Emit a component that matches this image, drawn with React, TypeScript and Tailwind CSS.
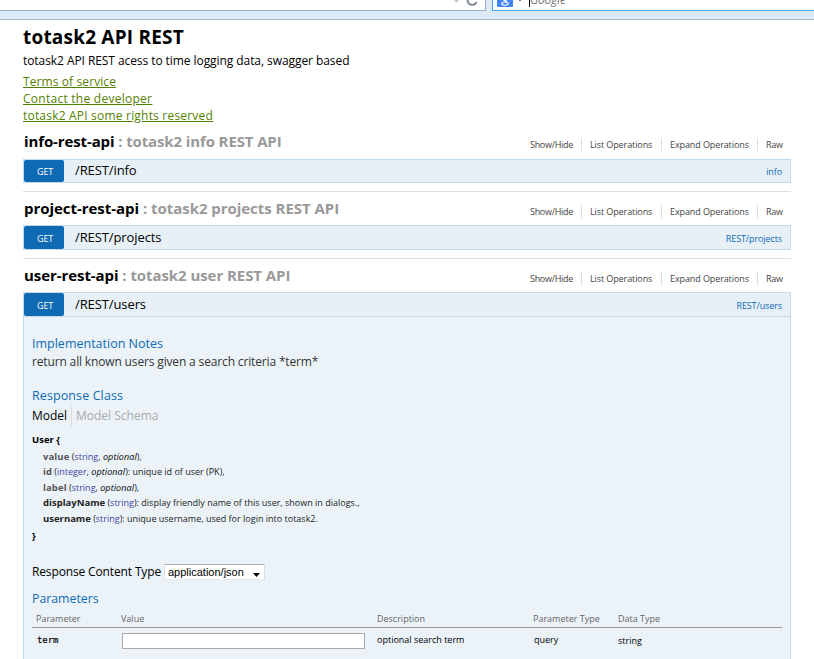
import React from "react";

function BrowserEdge() {
  return (
    <div className="relative h-5 overflow-hidden border-b border-[#9fb6d3] bg-[#dce9f7]">
      <div className="flex h-[11px] gap-[6px]">
        <div className="flex h-[11px] w-[486px] justify-end border-r border-b border-[#99adc4] bg-white">
          <svg className="h-[10px] w-8" viewBox="0 0 32 10" fill="none">
            <path d="M1 0h5L3.500 3z" fill="#c3cad4" />
            <path d="M15 -1.500a4.300 4.300 0 0 0 8.500 3.500" stroke="#7d8895" strokeWidth="2" />
          </svg>
        </div>
        <div className="flex h-[11px] flex-1 border-b border-l border-[#45a5f5] bg-white">
          <div className="ml-1 h-[7px] w-4 rounded-b-[1px] bg-[#4285f4]">
            <svg className="h-[7px] w-4" viewBox="0 0 16 7" fill="none" stroke="#fff" strokeWidth="1.100">
              <path d="M6.500 0q1.500 1 3 0M8 1l2 1.300" />
              <ellipse cx="8" cy="3.600" rx="3.300" ry="1.600" />
            </svg>
          </div>
          <span className="ml-[6px] h-px w-[2px] bg-[#777]" />
          <span className="ml-2 h-[7px] w-px bg-black" />
          <span className="-mt-[9px] text-[12px] leading-[17px] tracking-[-0.2px] text-[#777] italic">Google</span>
        </div>
      </div>
    </div>
  );
}

function ResourceHeading({ name, about, titleClass, navClass }: { name: string; about: string; titleClass: string; navClass: string }) {
  return (
    <div className="flex h-[33px] justify-between pr-2 pl-px">
      <h2 className={"text-[15px] font-bold whitespace-pre " + titleClass}>
        {name}<span className="text-[#999]"> : {about}</span>
      </h2>
      <ul className={"flex text-[9px] leading-[13px] tracking-[-0.1px] whitespace-nowrap text-[#444] " + navClass}>
        <li className="h-[13px] w-[52px] border-r border-[#ddd] tracking-[-0.3px]">Show/Hide</li>
        <li className="h-[13px] w-[80px] border-r border-[#ddd] pl-2">List Operations</li>
        <li className="h-[13px] w-[96px] border-r border-[#ddd] pl-2">Expand Operations</li>
        <li className="w-[25px] pl-2 tracking-[-0.3px]">Raw</li>
      </ul>
    </div>
  );
}

function Operation({ path, link, sizeClass, pathClass }: { path: string; link: string; sizeClass: string; pathClass: string }) {
  return (
    <div className={"flex border border-[#c3d9ec] bg-[#e7f0f7] " + sizeClass}>
      <span className="h-full w-10 rounded-[2px] bg-[#0f6ab4] pt-px pl-[2px] text-center text-[9px] tracking-[-0.2px] text-white">GET</span>
      <span className={"ml-[11px] flex-1 text-[13px] tracking-[-0.1px] " + pathClass}>{path}</span>
      <span className="pt-px pr-2 text-[9px] tracking-[-0.1px] text-[#0f6ab4]">{link}</span>
    </div>
  );
}

function Field({ name, type, optional, note, tone }: { name: string; type: string; optional?: boolean; note: string; tone: string }) {
  return (
    <div className="text-[9px] leading-[15.500px] whitespace-pre text-[#222]">
      <b className={"text-[9.500px] " + tone}>{name}</b> (<span className="text-[#4444a4]">{type}</span>
      {optional && <>, <i className="tracking-[0.1px] text-black">optional</i></>}){note}
    </div>
  );
}

export default function App() {
  return (
    <div className="h-[659px] overflow-hidden bg-white font-['Open_Sans','Noto_Sans',sans-serif] text-black">
      <BrowserEdge />
      <main className="ml-[23px] w-[768px]">
        <h1 className="h-[33px] text-[19px] leading-[34px] font-bold tracking-[0.2px] whitespace-nowrap">totask2 API REST</h1>
        <p className="h-5 text-[12px] leading-[16px] tracking-[-0.07px] whitespace-nowrap">totask2 API REST acess to time logging data, swagger based</p>
        <div className="flex h-[53px] flex-col items-start text-[12px] leading-[17px] text-[#547f00] underline">
          <a className="tracking-[0.1px]">Terms of service</a>
          <a className="tracking-[0.26px]">Contact the developer</a>
          <a className="tracking-[0.2px]">totask2 API some rights reserved</a>
        </div>
        <ResourceHeading name="info-rest-api" about="totask2 info REST API" titleClass="leading-[31px] tracking-[-0.12px]" navClass="pt-[12px]" />
        <Operation path="/REST/info" link="info" sizeClass="h-6 leading-[22px]" pathClass="leading-[21px]" />
        <div className="h-[9px] border-b border-[#ddd]" />
        <ResourceHeading name="project-rest-api" about="totask2 projects REST API" titleClass="leading-[33px] tracking-[-0.04px]" navClass="pt-[13px]" />
        <Operation path="/REST/projects" link="REST/projects" sizeClass="h-[25px] leading-[23px]" pathClass="" />
        <div className="h-[9px] border-b border-[#ddd]" />
        <ResourceHeading name="user-rest-api" about="totask2 user REST API" titleClass="leading-[33px] tracking-[-0.07px]" navClass="pt-[13px]" />
        <Operation path="/REST/users" link="REST/users" sizeClass="h-[25px] leading-[23px]" pathClass="" />
        <section className="h-[350px] border-x border-[#c3d9ec] bg-[#ebf3f9] px-2 pt-[18px] whitespace-nowrap">
          <h4 className="h-[18px] text-[12.500px] leading-[18px] text-[#0f6ab4]">Implementation Notes</h4>
          <p className="h-[34px] text-[12px] leading-[18px] tracking-[-0.15px] text-[#333]">return all known users given a search criteria *term*</p>
          <h4 className="h-[19px] text-[12.500px] leading-[18px] tracking-[0.1px] text-[#0f6ab4]">Response Class</h4>
          <div className="flex h-[21px] text-[12px] leading-[20px]">
            <span className="w-10 border-r border-[#ddd]">Model</span>
            <span className="ml-1 text-[#aaa]">Model Schema</span>
          </div>
          <div className="mt-[5px] h-[17px] text-[9.500px] leading-[15px] font-bold">{"User {"}</div>
          <div className="-mt-[0.500px] h-[79.500px] pl-[11px]">
            <Field name="value" type="string" optional note="," tone="text-[#555] tracking-[0.1px]" />
            <Field name="id" type="integer" optional note=": unique id of user (PK)," tone="text-[#555]" />
            <Field name="label" type="string" optional note="," tone="text-[#555] tracking-[0.1px]" />
            <Field name="displayName" type="string" note=": display friendly name of this user, shown in dialogs.," tone="text-[#222]" />
            <Field name="username" type="string" note=": unique username, used for login into totask2." tone="text-[#222]" />
          </div>
          <div className="h-[35px] text-[9.500px] leading-[15px] font-bold">{"}"}</div>
          <div className="flex h-[27px] text-[12px]">
            <span className="w-[132px] leading-[18px] tracking-[-0.14px]">Response Content Type</span>
            <div className="mt-px flex h-4 w-[101px] justify-between border border-t-[#abadb3] border-r-[#dbdfe6] border-b-[#e3e9ef] border-l-[#e2e3ea] bg-white pr-1 pl-[3px] font-['Liberation_Sans',Arial,sans-serif] text-[11px] leading-[15px]">
              <span>application/json</span>
              <svg className="mt-2 h-1 w-[7px]" viewBox="0 0 7 4"><path d="M0 0h7L3.500 4z" /></svg>
            </div>
          </div>
          <h4 className="h-[20px] text-[12.300px] leading-[18px] text-[#0f6ab4]">Parameters</h4>
          <div className="grid h-[18px] w-[750px] grid-cols-[85px_256px_156px_85px_1fr] border-b border-[#999] pl-1 text-[9px] leading-[17px] text-[#666]">
            <span>Parameter</span><span>Value</span><span>Description</span><span>Parameter Type</span><span>Data Type</span>
          </div>
          <div className="grid w-[750px] grid-cols-[85px_256px_156px_85px_1fr] pl-1 text-[9px] leading-[24px]">
            <span className="pl-px font-['DejaVu_Sans_Mono',monospace] tracking-[-0.1px] [-webkit-text-stroke:0.2px_black]">term</span>
            <span className="mt-[5px] ml-px h-4 w-[243px] border border-[#a9a9a9] bg-white" />
            <span>optional search term</span><span className="pl-px">query</span><span className="pt-px">string</span>
          </div>
        </section>
      </main>
    </div>
  );
}
